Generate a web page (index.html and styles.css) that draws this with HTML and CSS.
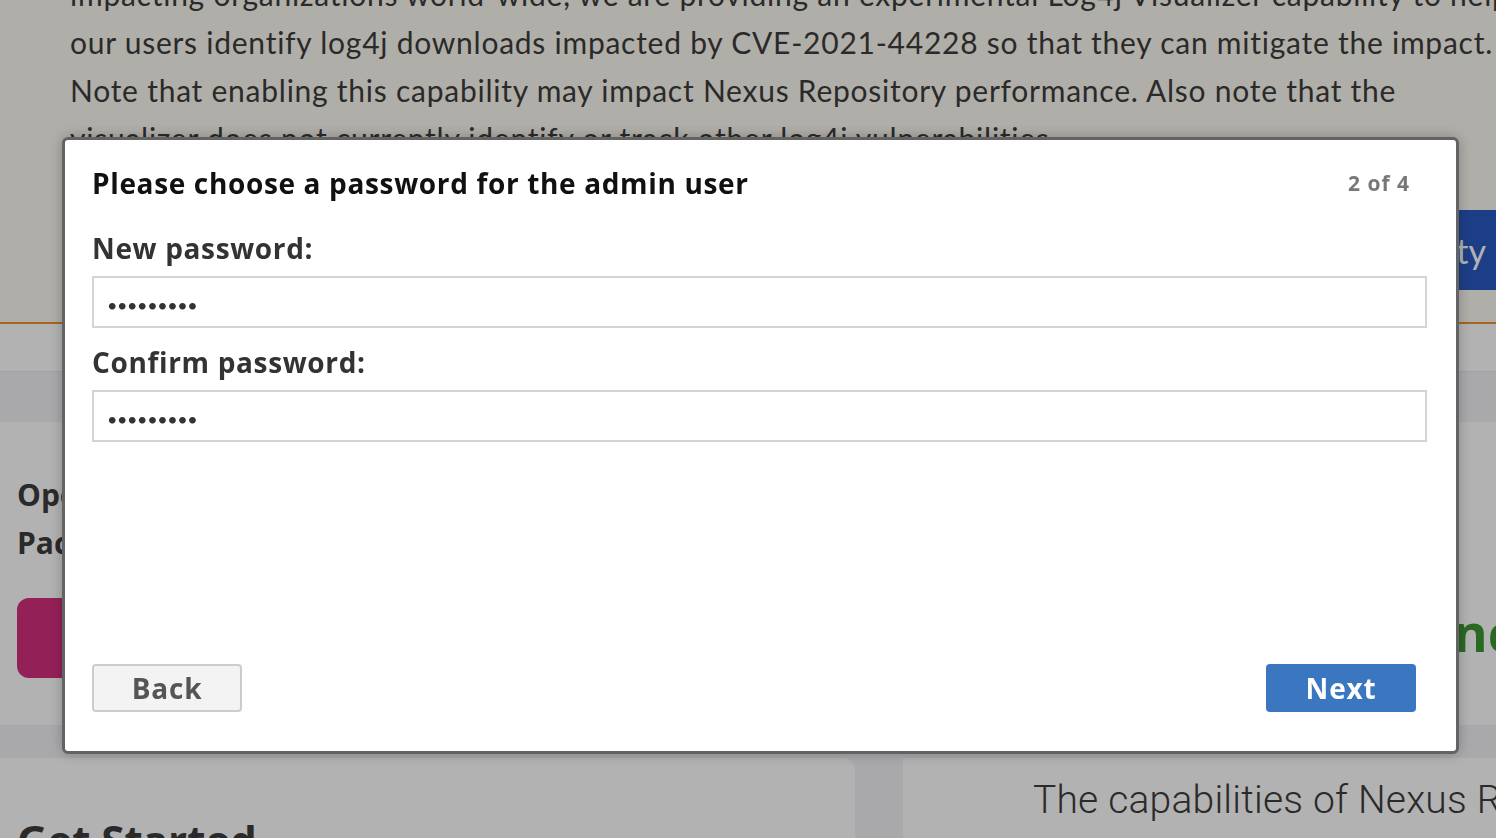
FILE: index.html
```html
<!DOCTYPE html>
<html lang="en">
<head>
<meta charset="utf-8">
<title>Setup</title>
<link rel="stylesheet" href="styles.css">
</head>
<body>
<div class="page">
  <header class="hero">
    <p class="notice">impacting organizations world-wide, we are providing an experimental Log4j Visualizer capability to help<br>our users identify log4j downloads impacted by CVE-2021-44228 so that they can mitigate the impact.<br>Note that enabling this capability may impact Nexus Repository performance. Also note that the<br>visualizer does not currently identify or track other log4j vulnerabilities.</p>
    <div class="hero-actions"><button class="cta">Enable Capability</button></div>
  </header>
  <nav class="tabs"></nav>
  <div class="band"></div>
  <section class="promo">
    <div class="promo-left">
      <h2 class="promo-title">Open Source<br>Package Management</h2>
      <button class="pink-btn">Learn More</button>
    </div>
    <div class="promo-right">
      <h2 class="green-title">Advanced</h2>
    </div>
  </section>
  <div class="band band-small"></div>
  <section class="cards">
    <div class="card card-left"><h2 class="card-title">Get Started</h2></div>
    <div class="card card-right"><p class="card-text">The capabilities of Nexus Repository</p></div>
  </section>
</div>
<div class="overlay"></div>
<div class="modal" role="dialog">
  <div class="modal-head">
    <h1 class="modal-title">Please choose a password for the admin user</h1>
    <span class="step">2 of 4</span>
  </div>
  <label class="field-label" for="pw1">New password:</label>
  <input class="field" id="pw1" type="password" value="admin1234">
  <label class="field-label" for="pw2">Confirm password:</label>
  <input class="field" id="pw2" type="password" value="admin1234">
  <div class="modal-actions">
    <button class="btn btn-back">Back</button>
    <button class="btn btn-next">Next</button>
  </div>
</div>
</body>
</html>
```
FILE: styles.css
```css
* { box-sizing: border-box; }
html, body { margin: 0; padding: 0; }
body {
  width: 1496px;
  height: 838px;
  overflow: hidden;
  font-family: Lato, "Open Sans", sans-serif;
  background: #ffffff;
}
.page { width: 1496px; }

.hero {
  height: 324px;
  background: #fdf9f1;
  border-bottom: 2px solid #f0902c;
  overflow: hidden;
  padding-left: 70px;
}
.notice {
  margin: -30px 0 0 0;
  font-size: 30px;
  line-height: 48px;
  letter-spacing: 0.75px;
  color: #3d3d3d;
  white-space: nowrap;
}
.hero-actions {
  display: flex;
  justify-content: flex-end;
  margin-top: 48px;
  margin-right: -30px;
}
.cta {
  height: 80px;
  padding: 0 40px;
  border: 0;
  border-radius: 6px;
  background: #295ac2;
  color: #ffffff;
  font-family: Lato, sans-serif;
  font-size: 34px;
  font-weight: 400;
}

.tabs { height: 48px; background: #ffffff; border-bottom: 1px solid #e8e8e8; }
.band { height: 50px; background: #f2f3f7; }
.band-small { height: 33px; }

.promo {
  height: 303px;
  background: #ffffff;
  display: flex;
  justify-content: space-between;
  overflow: hidden;
}
.promo-left { padding: 49px 0 0 17px; }
.promo-title {
  margin: 0;
  font-family: "Open Sans", sans-serif;
  font-size: 30px;
  line-height: 48px;
  font-weight: 700;
  color: #3d3d3d;
  white-space: nowrap;
}
.pink-btn {
  margin-top: 31px;
  width: 300px;
  height: 80px;
  border: 0;
  border-radius: 12px;
  background: #d52f7f;
  color: #ffffff;
  font-size: 28px;
}
.promo-right { padding: 180px 0 0 0; margin-right: -82px; }
.green-title {
  margin: 0;
  font-family: "Open Sans", sans-serif;
  font-size: 52px;
  line-height: 60px;
  font-weight: 700;
  color: #3d9731;
  white-space: nowrap;
}

.cards {
  display: flex;
  gap: 48px;
  background: #f2f3f7;
  height: 200px;
}
.card { background: #ffffff; }
.card-left {
  width: 855px;
  border-top-right-radius: 12px;
  padding: 57px 0 0 17px;
}
.card-title {
  margin: 0;
  font-family: "Open Sans", sans-serif;
  font-size: 42px;
  line-height: 1.2;
  font-weight: 700;
  color: #3d3d3d;
}
.card-right {
  flex: 1;
  padding: 19px 0 0 130px;
  overflow: hidden;
}
.card-text {
  margin: 0;
  font-family: Roboto, sans-serif;
  font-weight: 300;
  font-size: 39px;
  letter-spacing: 0.2px;
  color: #3d3d3d;
  white-space: nowrap;
}

.overlay {
  position: fixed;
  inset: 0;
  background: rgba(0, 0, 0, 0.3);
}

.modal {
  position: fixed;
  left: 62px;
  top: 137px;
  width: 1397px;
  height: 617px;
  background: #ffffff;
  border: 3px solid #636363;
  border-radius: 6px;
  box-shadow: 0 0 14px rgba(0, 0, 0, 0.25);
  padding: 26px 29px 39px 27px;
  display: flex;
  flex-direction: column;
}
.modal-head {
  display: flex;
  justify-content: space-between;
  align-items: center;
}
.modal-title {
  margin: 0;
  font-family: "Open Sans", sans-serif;
  font-size: 28px;
  line-height: 34px;
  letter-spacing: 0.65px;
  font-weight: 700;
  color: #111111;
}
.step {
  font-family: "Open Sans", sans-serif;
  font-size: 21px;
  letter-spacing: 1px;
  font-weight: 700;
  color: #777777;
  margin-right: 17px;
}
.field-label {
  display: block;
  margin-top: 31px;
  font-family: "Open Sans", sans-serif;
  font-size: 28px;
  line-height: 34px;
  letter-spacing: 0.65px;
  font-weight: 700;
  color: #333333;
}
.field-label + .field { margin-top: 11px; }
.field + .field-label { margin-top: 17px; }
.field {
  display: block;
  width: 100%;
  height: 52px;
  border: 2px solid #d4d4d4;
  border-radius: 0;
  padding: 5px 13px 0;
  font-family: Lato, sans-serif;
  font-size: 18px;
  letter-spacing: -0.4px;
  color: #333333;
  outline: none;
}
.modal-actions {
  margin-top: auto;
  display: flex;
  justify-content: space-between;
  padding-right: 11px;
}
.btn {
  width: 150px;
  height: 48px;
  border-radius: 4px;
  font-family: "Open Sans", sans-serif;
  font-size: 28px;
  letter-spacing: 0.8px;
  font-weight: 700;
  line-height: 1;
}
.btn-back {
  background: #f3f3f3;
  border: 2px solid #cccccc;
  color: #555555;
}
.btn-next {
  background: #3b76c0;
  border: 0;
  color: #ffffff;
}
```
